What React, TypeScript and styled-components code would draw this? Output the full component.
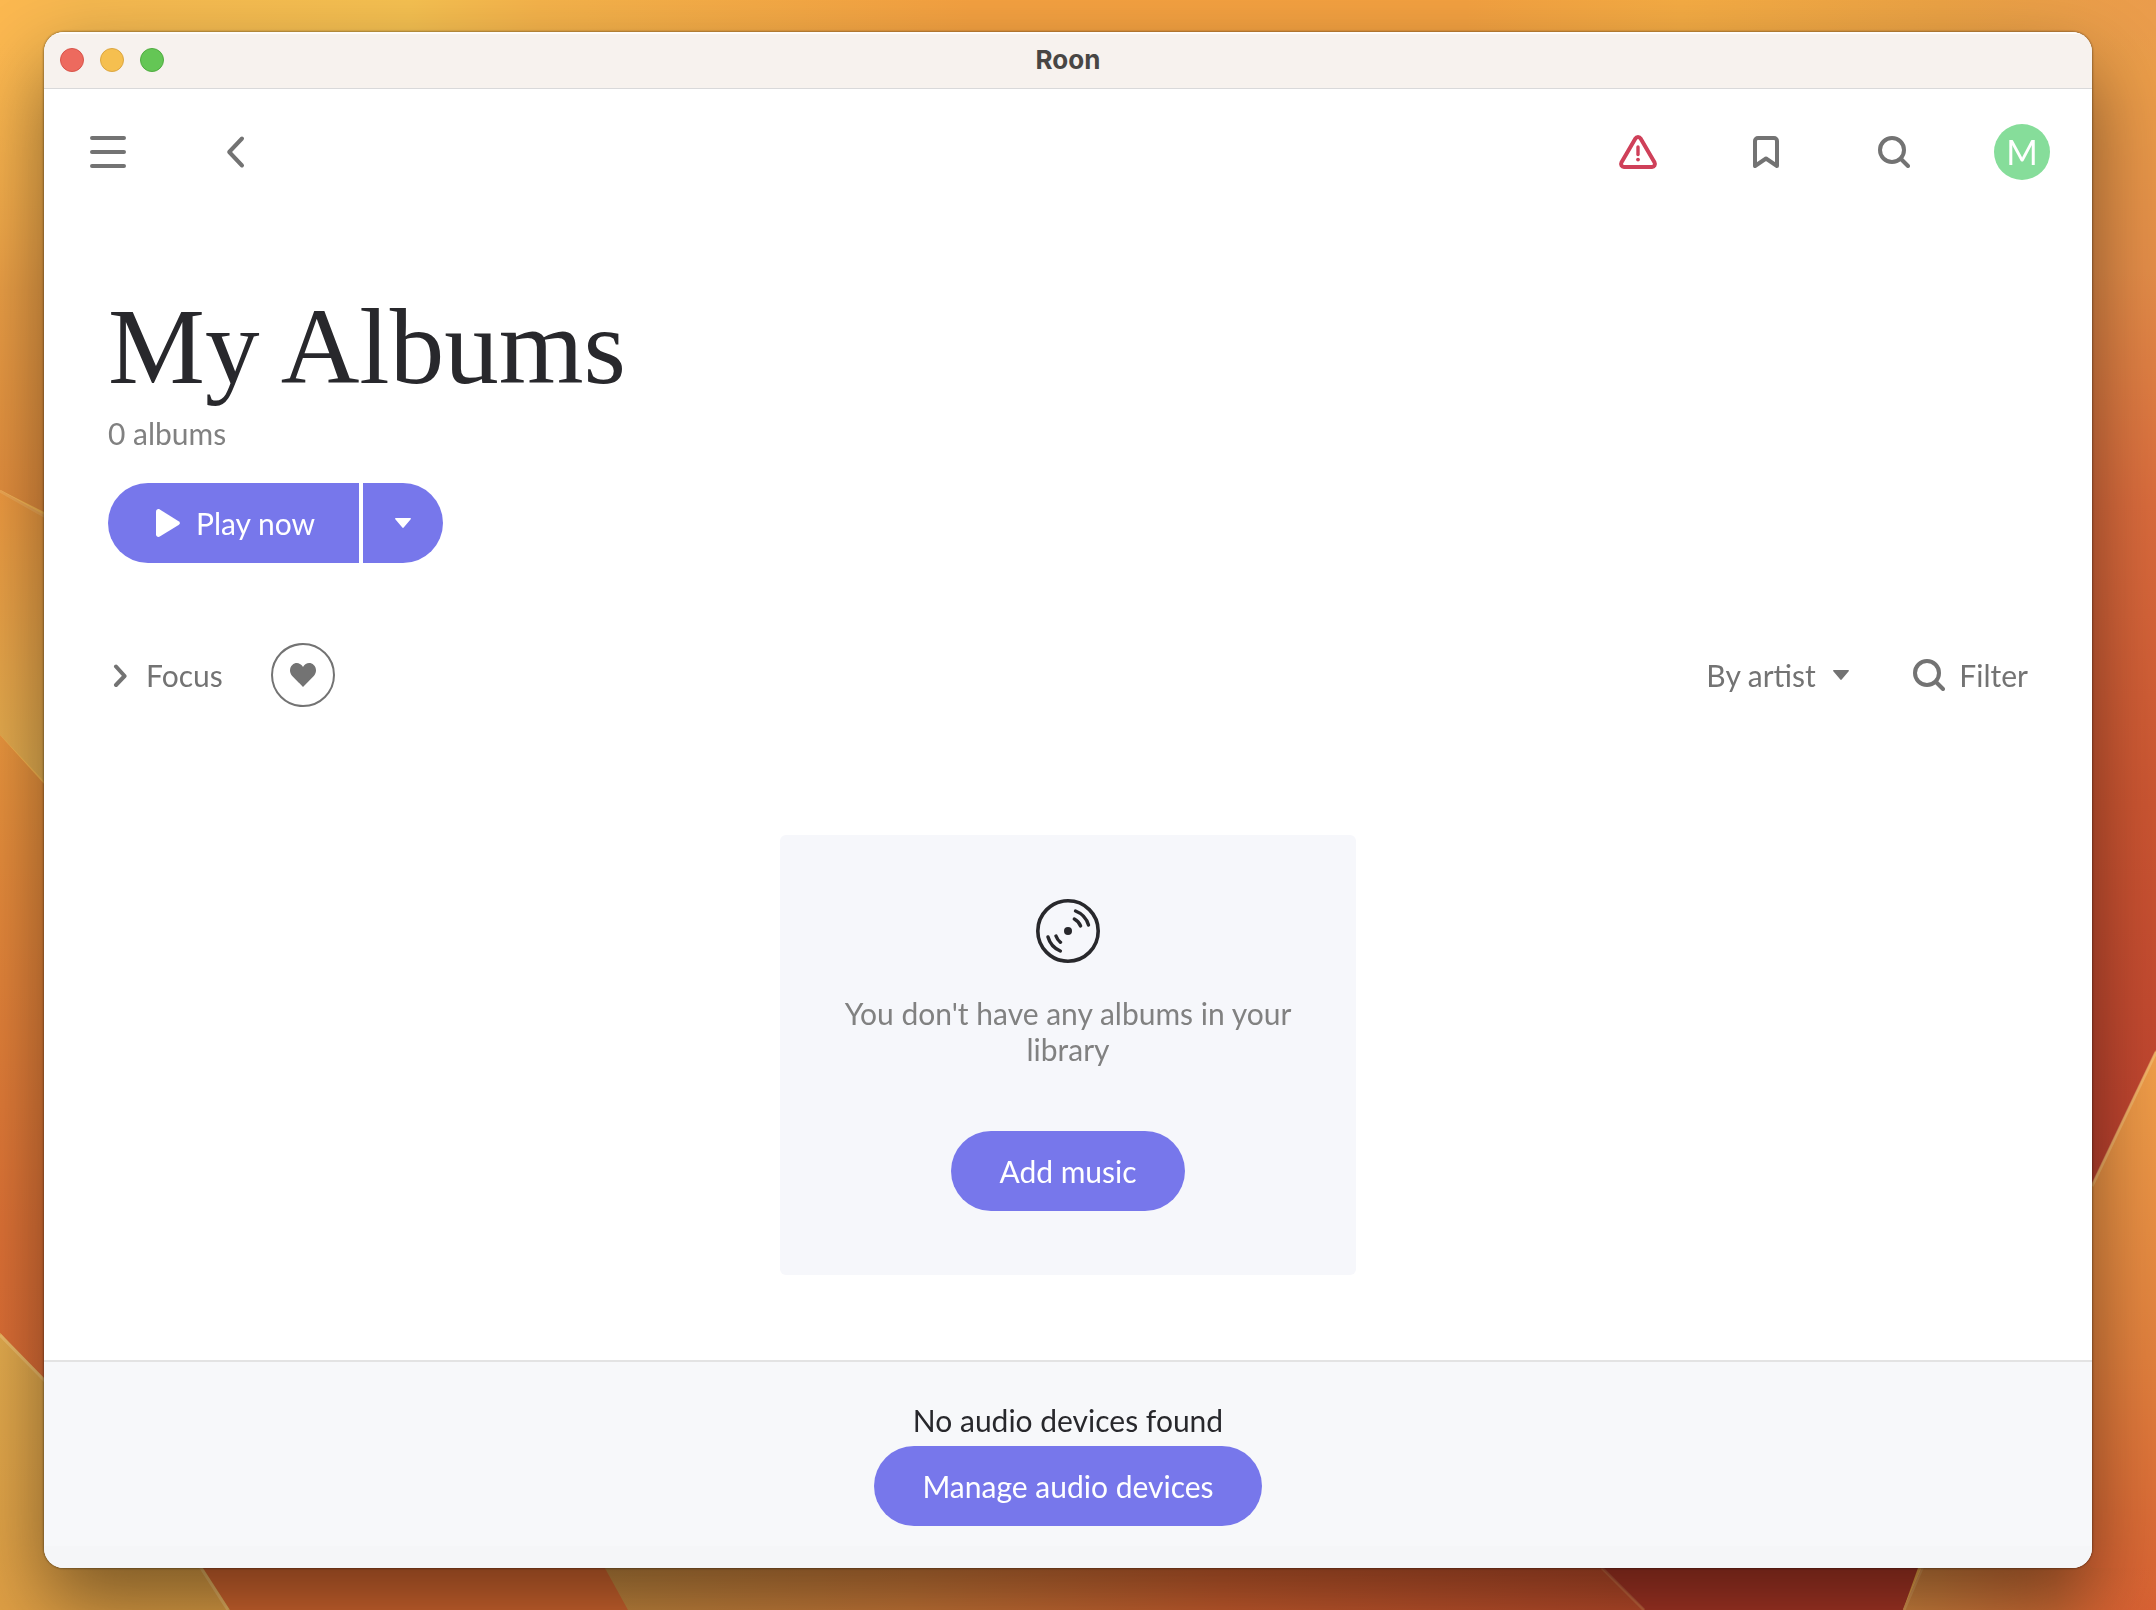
import React from 'react';
import styled, { createGlobalStyle } from 'styled-components';

const color = {
  accent: '#7777eb',
  ink: '#28282c',
  icon: '#737373',
  muted: '#818181',
  danger: '#cf4059',
  avatar: '#86dd9a',
  panel: '#f6f7fb',
};

const sans = `Lato, 'Open Sans', 'Liberation Sans', sans-serif`;

const GlobalStyle = createGlobalStyle`
  *, *::before, *::after { box-sizing: border-box; }
  body { margin: 0; font-family: ${sans}; font-size: 30px; line-height: 36px; color: ${color.ink}; }
  button, select { font: inherit; color: inherit; margin: 0; padding: 0; border: 0; background: none; cursor: pointer; }
  svg { display: block; flex: none; }
  h1, p { margin: 0; font-weight: 400; }
`;

const Desktop = styled.div`
  position: relative;
  display: flex;
  min-height: 100vh;
  padding: 32px 64px 42px 44px;
  overflow: hidden;
`;

const WallpaperArt = styled.svg`
  position: absolute;
  inset: 0;
  width: 100%;
  height: 100%;
`;

const Window = styled.div`
  position: relative;
  flex: 1;
  min-width: 0;
  display: flex;
  flex-direction: column;
  border-radius: 20px;
  background: #fff;
  overflow: hidden;
  box-shadow: 0 0 2px 1px rgba(0, 0, 0, 0.3), 0 36px 80px rgba(0, 0, 0, 0.46);
`;

const TitleBar = styled.header`
  display: grid;
  grid-template-columns: 1fr auto 1fr;
  align-items: center;
  height: 57px;
  padding: 0 16px;
  background: #f7f2ee;
  border-bottom: 1px solid #d9d9da;
  box-shadow: inset 0 2px 0 #fffdfb;
`;

const WindowControls = styled.div`
  display: flex;
  gap: 16px;
`;

const Light = styled.button<{ $fill: string; $edge: string }>`
  width: 24px;
  height: 24px;
  border-radius: 50%;
  background: ${(p) => p.$fill};
  border: 1px solid ${(p) => p.$edge};
`;

const WindowTitle = styled.div`
  font-family: Inter, Roboto, 'Liberation Sans', sans-serif;
  font-size: 26px;
  line-height: 32px;
  font-weight: 700;
  color: #484644;
`;

const Toolbar = styled.nav`
  display: flex;
  justify-content: space-between;
  height: 126px;
  padding-right: 6px;
`;

const ToolGroup = styled.div`
  display: flex;
`;

const ToolButton = styled.button<{ $tone?: string }>`
  display: flex;
  align-items: center;
  justify-content: center;
  width: 128px;
  color: ${(p) => p.$tone ?? color.icon};
`;

const Avatar = styled.span`
  display: flex;
  align-items: center;
  justify-content: center;
  width: 56px;
  height: 56px;
  border-radius: 50%;
  background: ${color.avatar};
  color: #fff;
  font-size: 34px;
`;

const Content = styled.main`
  flex: 1;
  display: flex;
  flex-direction: column;
  align-items: flex-start;
  padding: 64px 64px 80px;
`;

const PageTitle = styled.h1`
  font-family: 'Liberation Serif', 'Times New Roman', serif;
  font-size: 109px;
  line-height: 136px;
`;

const Muted = styled.p<{ $center?: boolean }>`
  color: ${color.muted};
  text-align: ${(p) => (p.$center ? 'center' : 'left')};
`;

const SplitButton = styled.div`
  display: flex;
  gap: 4px;
  margin-top: 32px;
  border-radius: 40px;
  overflow: hidden;
`;

const SplitPart = styled.button<{ $main?: boolean }>`
  display: flex;
  align-items: center;
  justify-content: center;
  gap: 16px;
  height: 80px;
  min-width: 80px;
  padding: ${(p) => (p.$main ? '0 44px 0 48px' : '0')};
  background: ${color.accent};
  color: #fff;
`;

const PillButton = styled.button`
  height: 80px;
  padding: 0 48px;
  border-radius: 40px;
  background: ${color.accent};
  color: #fff;
`;

const FilterBar = styled.div`
  display: flex;
  align-items: center;
  justify-content: space-between;
  align-self: stretch;
  margin-top: 80px;
  color: ${color.icon};
`;

const FilterGroup = styled.div<{ $gap: number }>`
  display: flex;
  align-items: center;
  gap: ${(p) => p.$gap}px;
`;

const TextButton = styled.button`
  display: flex;
  align-items: center;
  gap: 14px;
`;

const RoundButton = styled.button`
  display: flex;
  align-items: center;
  justify-content: center;
  width: 64px;
  height: 64px;
  border: 2px solid ${color.icon};
  border-radius: 50%;
`;

const SortField = styled.label`
  display: grid;
  align-items: center;

  > * {
    grid-area: 1 / 1;
  }

  > svg {
    justify-self: end;
    pointer-events: none;
  }
`;

const SortSelect = styled.select`
  appearance: none;
  padding-right: 32px;
  line-height: 36px;
`;

const EmptyCard = styled.section`
  align-self: center;
  display: flex;
  flex-direction: column;
  align-items: center;
  width: 576px;
  max-width: 100%;
  margin-top: 128px;
  padding: 64px 48px;
  border-radius: 6px;
  background: ${color.panel};

  > p {
    margin: 32px 0 64px;
  }
`;

const Footer = styled.footer`
  display: flex;
  flex-direction: column;
  align-items: center;
  gap: 8px;
  padding: 40px 64px 42px;
  border-top: 2px solid #e3e3e3;
  background: linear-gradient(to top, #f5f6f8 22px, #f7f8fa 22px);
`;

const strokeProps = {
  fill: 'none',
  stroke: 'currentColor',
  strokeWidth: 4,
  strokeLinecap: 'round' as const,
  strokeLinejoin: 'round' as const,
};

const MenuIcon = () => (
  <svg width="48" height="48" viewBox="0 0 48 48" {...strokeProps}>
    <path d="M8 10H40M8 24H40M8 38H40" />
  </svg>
);

const BackIcon = () => (
  <svg width="48" height="48" viewBox="0 0 48 48" {...strokeProps}>
    <path d="M30 10.5L17.2 24L30 37.5" />
  </svg>
);

const WarningIcon = () => (
  <svg width="48" height="48" viewBox="0 0 48 48" {...strokeProps}>
    <path d="M21.4 10.5a3 3 0 0 1 5.2 0L40.6 34.6a3 3 0 0 1-2.6 4.4H10a3 3 0 0 1-2.6-4.4Z" />
    <path d="M24 19V26.5" strokeWidth="3.4" />
    <circle cx="24" cy="31.6" r="1.9" fill="currentColor" stroke="none" />
  </svg>
);

const BookmarkIcon = () => (
  <svg width="48" height="48" viewBox="0 0 48 48" {...strokeProps}>
    <path d="M13 38V13a3 3 0 0 1 3-3H32a3 3 0 0 1 3 3V38L24 30.5Z" />
  </svg>
);

const SearchIcon = () => (
  <svg width="32" height="32" viewBox="0 0 32 32" {...strokeProps}>
    <circle cx="14" cy="14" r="12" />
    <path d="M23 23L30 30" />
  </svg>
);

const ChevronIcon = () => (
  <svg width="24" height="24" viewBox="0 0 24 24" {...strokeProps}>
    <path d="M8 3.5L16.6 13L8 22" />
  </svg>
);

const PlayIcon = () => (
  <svg width="24" height="28" viewBox="0 0 24 28" fill="currentColor">
    <path d="M0 2.8C0 .6 2-.6 3.8.4L22.6 12.2c1.8 1.2 1.8 2.6 0 3.8L3.8 27.6C2 28.6 0 27.4 0 25.2Z" />
  </svg>
);

const CaretIcon = () => (
  <svg width="16" height="10" viewBox="0 0 16 10" fill="currentColor">
    <path d="M.8 0H15.2c.8 0 1 .6.5 1.2L8.7 9.5c-.4.5-1 .5-1.4 0L.3 1.2C-.2.6 0 0 .8 0Z" />
  </svg>
);

const HeartIcon = () => (
  <svg width="26" height="24" viewBox="0 0 26 24" fill="currentColor">
    <path d="M13 24L2.2 12.9C-.9 9.6-.6 4.5 2.3 1.9 5.5-1 10.6-.4 13 4 15.4-.4 20.5-1 23.7 1.9c2.900 2.600 3.200 7.700.1 11Z" />
  </svg>
);

const DiscIcon = () => (
  <svg width="64" height="64" viewBox="0 0 64 64" {...strokeProps} strokeWidth="3.4">
    <circle cx="32" cy="32" r="30.2" strokeWidth="3.6" />
    <circle cx="32" cy="32" r="4" fill="currentColor" stroke="none" />
    <path d="M39.5 12A21.5 21.5 0 0 1 52.5 26" />
    <path d="M38.3 20A13.5 13.5 0 0 1 44.6 27" />
    <path d="M24.3 52A21.5 21.5 0 0 1 12 38" />
    <path d="M24.5 43.3A13.5 13.5 0 0 1 20 37" />
  </svg>
);

const Wallpaper = () => (
  <WallpaperArt viewBox="0 0 2156 1610" preserveAspectRatio="none" aria-hidden="true">
    <defs>
      <linearGradient id="top" x1="0" y1="0" x2="1" y2="0">
        <stop offset="0" stopColor="#fcb850" />
        <stop offset=".04" stopColor="#f5b850" />
        <stop offset=".19" stopColor="#f5c051" />
        <stop offset=".25" stopColor="#f5b34b" />
        <stop offset=".45" stopColor="#f4a141" />
        <stop offset=".68" stopColor="#f3a141" />
        <stop offset=".78" stopColor="#f5ac44" />
        <stop offset=".9" stopColor="#eca345" />
        <stop offset="1" stopColor="#ea9c4c" />
      </linearGradient>
      <linearGradient id="leftTop" x1="0" y1="0" x2="0" y2="1">
        <stop offset="0" stopColor="#f9b34d" stopOpacity="0" />
        <stop offset=".5" stopColor="#eb9f46" />
        <stop offset="1" stopColor="#e28b3c" />
      </linearGradient>
      <linearGradient id="leftMid" x1="0" y1="0" x2="0" y2="1">
        <stop offset="0" stopColor="#ee9a41" />
        <stop offset="1" stopColor="#e2b253" />
      </linearGradient>
      <linearGradient id="leftLow" x1="0" y1="0" x2="0" y2="1">
        <stop offset="0" stopColor="#ea963e" />
        <stop offset=".7" stopColor="#de7236" />
        <stop offset="1" stopColor="#da6a35" />
      </linearGradient>
      <linearGradient id="corner" x1="0" y1="0" x2="0" y2="1">
        <stop offset="0" stopColor="#e3ab4e" />
        <stop offset="1" stopColor="#e0a045" />
      </linearGradient>
      <linearGradient id="right" x1="0" y1="0" x2="0" y2="1">
        <stop offset="0" stopColor="#eb9f49" stopOpacity="0" />
        <stop offset=".04" stopColor="#eb9d49" />
        <stop offset=".2" stopColor="#e58e49" />
        <stop offset=".4" stopColor="#db6c3d" />
        <stop offset=".65" stopColor="#cd5632" />
        <stop offset="1" stopColor="#bc3f2e" />
      </linearGradient>
      <linearGradient id="rightLow" x1="0" y1="0" x2="0" y2="1">
        <stop offset="0" stopColor="#f2a04a" />
        <stop offset=".5" stopColor="#e4843f" />
        <stop offset="1" stopColor="#d96233" />
      </linearGradient>
      <linearGradient id="bottom" x1="600" y1="0" x2="1640" y2="0" gradientUnits="userSpaceOnUse">
        <stop offset="0" stopColor="#c98c40" />
        <stop offset=".3" stopColor="#cf7b39" />
        <stop offset=".6" stopColor="#d0602f" />
        <stop offset="1" stopColor="#c04d2b" />
      </linearGradient>
      <linearGradient id="bottomRight" x1="1904" y1="0" x2="2156" y2="0" gradientUnits="userSpaceOnUse">
        <stop offset="0" stopColor="#d58740" />
        <stop offset=".6" stopColor="#d06b34" />
        <stop offset="1" stopColor="#d96332" stopOpacity="0" />
      </linearGradient>
    </defs>
    <rect width="2156" height="1610" fill="url(#top)" />
    <path d="M0 40H44L100 540L0 490Z" fill="url(#leftTop)" />
    <path d="M0 490L100 546V840L0 735Z" fill="url(#leftMid)" />
    <path d="M0 735L100 846V1440L0 1333Z" fill="url(#leftLow)" />
    <path d="M44 1378L700 1378V1610H44Z" fill="#d5672f" />
    <path d="M0 1333L44 1378Q150 1490 203 1568L230 1610H0Z" fill="url(#corner)" />
    <path d="M540 1450L628 1610H1700V1450Z" fill="url(#bottom)" />
    <path d="M1480 1450L1645 1610H1903L1960 1450Z" fill="#aa3625" />
    <path d="M2000 30H2156V1060L2080 1220L2000 1200Z" fill="url(#right)" />
    <path d="M2156 1050L2092 1184L1903 1610H2156Z" fill="url(#rightLow)" />
    <path d="M1980 1440L1903 1610H2156V1568H2092Z" fill="url(#bottomRight)" />
    <g fill="none" stroke="#f8cf88" strokeWidth="3" opacity=".45">
      <path d="M0 491L60 525" opacity=".6" />
      <path d="M0 1335L44 1380Q150 1492 201 1568L228 1610" />
      <path d="M2156 1052L2092 1186" />
      <path d="M1923 1566L1904 1610" opacity=".6" />
      <path d="M1602 1568L1644 1610" opacity=".5" />
    </g>
  </WallpaperArt>
);

export default function App() {
  return (
    <>
      <GlobalStyle />
      <Desktop>
        <Wallpaper />
        <Window>
          <TitleBar>
            <WindowControls>
              <Light $fill="#ed6a5e" $edge="#d8544a" aria-label="Close" />
              <Light $fill="#f5bf4f" $edge="#dba640" aria-label="Minimize" />
              <Light $fill="#64c655" $edge="#50ac40" aria-label="Zoom" />
            </WindowControls>
            <WindowTitle>Roon</WindowTitle>
          </TitleBar>

          <Toolbar>
            <ToolGroup>
              <ToolButton aria-label="Menu"><MenuIcon /></ToolButton>
              <ToolButton aria-label="Back"><BackIcon /></ToolButton>
            </ToolGroup>
            <ToolGroup>
              <ToolButton $tone={color.danger} aria-label="Warnings"><WarningIcon /></ToolButton>
              <ToolButton aria-label="Bookmarks"><BookmarkIcon /></ToolButton>
              <ToolButton aria-label="Search"><SearchIcon /></ToolButton>
              <ToolButton aria-label="Profile"><Avatar>M</Avatar></ToolButton>
            </ToolGroup>
          </Toolbar>

          <Content>
            <PageTitle>My Albums</PageTitle>
            <Muted>0 albums</Muted>
            <SplitButton>
              <SplitPart $main><PlayIcon />Play now</SplitPart>
              <SplitPart aria-label="More play options"><CaretIcon /></SplitPart>
            </SplitButton>

            <FilterBar>
              <FilterGroup $gap={48}>
                <TextButton><ChevronIcon />Focus</TextButton>
                <RoundButton aria-label="Favorites"><HeartIcon /></RoundButton>
              </FilterGroup>
              <FilterGroup $gap={64}>
                <SortField>
                  <SortSelect aria-label="Sort albums" defaultValue="artist">
                    <option value="artist">By artist</option>
                  </SortSelect>
                  <CaretIcon />
                </SortField>
                <TextButton><SearchIcon />Filter</TextButton>
              </FilterGroup>
            </FilterBar>

            <EmptyCard>
              <DiscIcon />
              <Muted $center>You don't have any albums in your library</Muted>
              <PillButton>Add music</PillButton>
            </EmptyCard>
          </Content>

          <Footer>
            <p>No audio devices found</p>
            <PillButton>Manage audio devices</PillButton>
          </Footer>
        </Window>
      </Desktop>
    </>
  );
}
